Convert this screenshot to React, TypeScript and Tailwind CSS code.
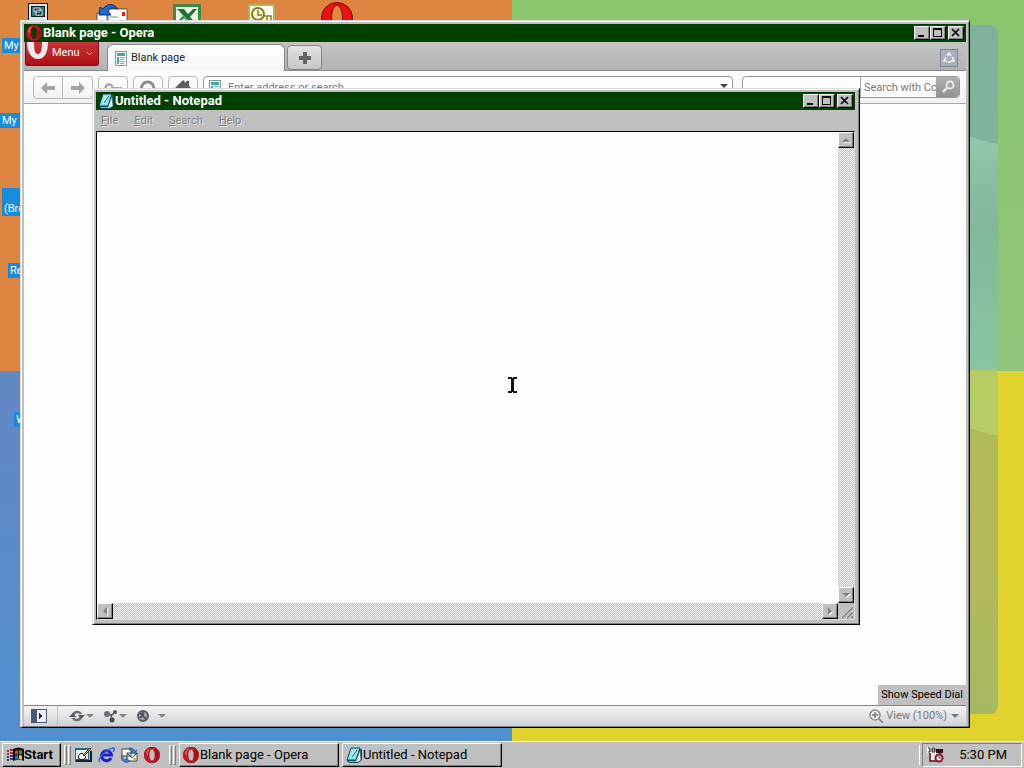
import type { ReactNode } from "react";
import clsx from "clsx";

type IconProps = {
	className?: string;
};

const raised =
	"border border-t-white border-l-white border-r-black border-b-black bg-[#c0c0c0] shadow-[inset_-1px_-1px_0_#808080]";

const dither =
	"bg-[repeating-conic-gradient(#bdbdbd_0_25%,#fbfbfb_0_50%)] bg-[length:2px_2px]";

function OperaIcon({ className }: IconProps) {
	return (
		<svg viewBox="0 0 16 16" className={className} aria-hidden>
			<path
				d="M8 0a7.800 8 0 1 0 .01 0zM8 2c4 0 4 12 0 12S4 2 8 2z"
				fill="#c8181c"
				fillRule="evenodd"
				stroke="#7c0a10"
				strokeWidth=".6"
			/>
			<path d="M2 6q1-4 4-5-2 3-2 8z" fill="#f07478" opacity=".7" />
			<path d="M11 2q4 2 4 6t-4 6q2-6 0-12z" fill="#8e0b10" opacity=".6" />
		</svg>
	);
}

function NotepadIcon({ className }: IconProps) {
	return (
		<svg viewBox="0 0 16 16" className={className} aria-hidden>
			<path d="M5 2h10l1 1v10l-4 3H3l-2-2z" fill="#0b4a58" />
			<path d="M5 1h9l-4 12H1z" fill="#7be4ec" stroke="#123" strokeWidth=".8" />
			<path d="M14 3l1 10-3 2H3l-1-1h8z" fill="#f4ffff" stroke="#176070" strokeWidth=".6" />
			<path d="M6 4h5M5.500 6h5M5 8h4M4.500 10h4" stroke="#e8ffff" />
			<path d="M11 3l-5 7" stroke="#205a90" />
		</svg>
	);
}

function PageIcon({ className }: IconProps) {
	return (
		<svg viewBox="0 0 12 15" className={className} shapeRendering="crispEdges" aria-hidden>
			<path d="M0 0h12v15H0z" fill="#7c9c9c" />
			<path d="M1 1h10v13H1z" fill="#fff" />
			<path d="M2 2h8v3H2zM2 6h2v7H2z" fill="#45a8a0" />
			<path d="M5 6h5v1H5zM5 8h4v1H5zM5 10h5v1H5zM5 12h4v1H5z" fill="#6db8b0" />
		</svg>
	);
}

function Caret({ className }: IconProps) {
	return (
		<svg viewBox="0 0 8 4" className={clsx("h-1 w-2 shrink-0", className)} aria-hidden>
			<path d="M0 0h8L4 4z" fill="currentColor" />
		</svg>
	);
}

function WindowControls({ name }: { name: string }) {
	const button = clsx(raised, "flex h-[14px] w-4 items-center justify-center");
	return (
		<div className="flex shrink-0 text-black">
			<button type="button" aria-label={`Minimize ${name}`} className={button}>
				<svg viewBox="0 0 12 10" className="h-[10px] w-3" shapeRendering="crispEdges" aria-hidden>
					<path d="M2 7h6v2H2z" />
				</svg>
			</button>
			<button type="button" aria-label={`Maximize ${name}`} className={button}>
				<svg viewBox="0 0 12 10" className="h-[10px] w-3" shapeRendering="crispEdges" aria-hidden>
					<path d="M1 0h9v9H1zM2 2v6h7V2z" fillRule="evenodd" />
				</svg>
			</button>
			<button type="button" aria-label={`Close ${name}`} className={clsx(button, "ml-[2px]")}>
				<svg viewBox="0 0 12 10" className="h-[10px] w-3" aria-hidden>
					<path d="M2 1l7 7M9 1L2 8" stroke="#000" strokeWidth="1.700" />
				</svg>
			</button>
		</div>
	);
}

function TitleBar({ title, icon }: { title: string; icon: ReactNode }) {
	return (
		<div className="flex h-[18px] shrink-0 items-center bg-[#004000] pr-[2px] pl-[2px]">
			{icon}
			<h2 className="flex-1 truncate pl-px text-[13px] leading-[18px] font-bold text-white">{title}</h2>
			<WindowControls name={title} />
		</div>
	);
}

const labels = [
	{ text: "My", className: "top-[38px] left-[2px] h-[15px]" },
	{ text: "My I", className: "top-[113px] left-0 h-[15px]" },
	{ text: "(Bro", className: "top-[188px] left-[2px] h-7 items-end" },
	{ text: "Re", className: "top-[263px] left-2 h-[15px]" },
	{ text: "W", className: "top-[412px] left-[14px] h-[15px]" },
];

function DesktopIcons() {
	return (
		<>
			<svg viewBox="0 0 22 20" className="absolute top-[2px] left-[27px] h-5 w-[22px]" aria-hidden>
				<path d="M1 1h20v18H1z" fill="#0a1822" />
				<path d="M2 2h18v16H2z" fill="#d8e8e8" />
				<path d="M4 4h14v11H4z" fill="#08222c" />
				<path d="M5 5h12v9H5z" fill="#28788a" />
				<path d="M7 6h6v4H7zM9 8h6v5H9z" fill="#102838" stroke="#e8ffff" strokeWidth=".8" />
			</svg>
			<svg viewBox="0 0 32 18" className="absolute top-[3px] left-[96px] h-[18px] w-8" aria-hidden>
				<path d="M1 10h11v8H1zM11 6h20v12H11z" fill="#fff" stroke="#222" strokeWidth=".7" />
				<path d="M26 9h3v4h-3z" fill="#d82020" />
				<path d="M14 14h8" stroke="#888" />
				<path d="M3 12L4 4l3 2C11 0 18 0 22 6c-5-2-8-1-10 2l3 4z" fill="#176bd4" stroke="#06306e" />
			</svg>
			<svg viewBox="0 0 28 18" className="absolute top-1 left-[173px] h-[18px] w-7" aria-hidden>
				<path d="M0 0h28v18H0z" fill="#3d8a48" />
				<path d="M3 3h22v15H3z" fill="#eef8e8" />
				<path d="M4 5h7l4 5 5-5h4l-7 8 5 5h-8l-3-4-5 4H4l6-6z" fill="#1c7038" />
				<path d="M5 6l11 12" stroke="#a5d8a0" />
			</svg>
			<svg viewBox="0 0 27 18" className="absolute top-1 left-[248px] h-[18px] w-[27px]" aria-hidden>
				<path d="M0 0h27v18H0z" fill="#b8b058" />
				<path d="M2 2h23v16H2z" fill="#fffff0" />
				<circle cx="10" cy="10" r="6" fill="#fffbd8" stroke="#8b7b18" strokeWidth="2" />
				<path d="M10 6v5h4M16 12h7v6M19 13v4" fill="none" stroke="#8b7b18" strokeWidth="1.500" />
			</svg>
			<svg viewBox="0 0 32 32" className="absolute top-[2px] left-[321px] size-8" aria-hidden>
				<circle cx="16" cy="16" r="15.500" fill="#ed1010" stroke="#780808" />
				<ellipse cx="16" cy="16" rx="5.500" ry="13" fill="#dc8840" stroke="#780808" />
			</svg>
			{labels.map((label) => (
				<span
					key={label.text}
					className={clsx(
						"absolute flex items-center bg-[#178bdc] px-[2px] text-[11px] leading-[15px] whitespace-nowrap text-white",
						label.className,
					)}
				>
					{label.text}
				</span>
			))}
		</>
	);
}

function Wallpaper() {
	return (
		<div className="absolute inset-0 grid grid-cols-2 grid-rows-2" aria-hidden>
			<div className="bg-[#dd8642]" />
			<div className="bg-linear-to-b from-[#8ac66e] to-[#91c47b]" />
			<div className="bg-linear-to-b from-[#6288c3] to-[#5190d0]" />
			<div className="bg-[#e0d32e]" />
			<div className="absolute top-[25px] right-[26px] bottom-1/2 w-16 rounded-tr-lg bg-linear-to-b from-[#7fb09c] via-[#80b69c] to-[#8ac6a2]" />
			<div className="absolute top-1/2 right-[26px] bottom-[27px] w-16 rounded-br-lg bg-linear-to-b from-[#b0ba58] via-[#b4b958] to-[#a6b862]" />
			<svg viewBox="0 0 28 300" className="absolute top-[136px] right-[26px] h-[300px] w-7">
				<defs>
					<linearGradient id="glow" x1="0" y1="0" x2="0" y2="1">
						<stop offset="0" stopColor="#93c7aa" />
						<stop offset="1" stopColor="#93c7aa" stopOpacity="0" />
					</linearGradient>
				</defs>
				<path d="M0 0q14 6 28 8v82H0z" fill="url(#glow)" />
				<path d="M0 292q16 6 28 8V234H0z" fill="#b7cc65" />
			</svg>
		</div>
	);
}

function OperaTabs() {
	return (
		<div className="flex h-[29px] shrink-0 items-start border-b border-[#8a8a8a] bg-linear-to-b from-[#c4c4c4] to-[#b2b2b2] pr-2 pl-px">
			<button
				type="button"
				className="flex h-6 w-[74px] items-center rounded-b-[3px] border border-t-0 border-[#7d1014] bg-linear-to-b from-[#c63338] to-[#ad0c12] text-[11px] text-white"
			>
				<svg viewBox="0 0 22 20" className="h-5 w-[22px] self-start" aria-hidden>
					<path d="M1 0h7c0 8 1 12 4 12s4-4 4-12h6c0 11-4 17-10 17S1 11 1 0z" fill="#f2e8e8" />
				</svg>
				<span className="flex-1 pl-1 text-left">Menu</span>
				<svg viewBox="0 0 7 5" className="mr-[5px] h-[5px] w-[7px]" aria-hidden>
					<path d="M1 1l2.500 3L6 1" fill="none" stroke="#e68c8e" />
				</svg>
			</button>
			<button
				type="button"
				className="mt-[2px] ml-2 flex h-[27px] w-[178px] items-center gap-1 rounded-t-md border border-b-0 border-[#858585] bg-linear-to-b from-[#fff] to-[#f6f6f6] pl-[7px] text-[11px] text-[#222]"
			>
				<PageIcon className="h-[15px] w-3" />
				Blank page
			</button>
			<button
				type="button"
				aria-label="New tab"
				className="mt-[3px] ml-[2px] flex h-[25px] w-[35px] items-center justify-center rounded-[4px] border border-[#858585] bg-linear-to-b from-[#e2e2e2] to-[#c6c6c6]"
			>
				<svg viewBox="0 0 12 12" className="size-3" aria-hidden>
					<path d="M4 0h4v4h4v4H8v4H4V8H0V4h4z" fill="#62626a" />
				</svg>
			</button>
			<button
				type="button"
				aria-label="Closed tabs"
				className="mt-[7px] ml-auto flex size-[18px] items-center justify-center border border-[#7d8794] bg-[#a8b0bb]"
			>
				<svg viewBox="0 0 12 12" className="size-3" aria-hidden>
					<path d="M4 4l2-3 2 3M9 5l2 4H8M3 5L1 9h3M5 10h3" fill="none" stroke="#f4f6fa" strokeWidth="1.500" />
				</svg>
			</button>
		</div>
	);
}

function OperaToolbar() {
	const tool = "flex h-[23px] w-[30px] items-center justify-center border border-[#b8b8b8] bg-linear-to-b from-white to-[#f2f2f2]";
	return (
		<div className="flex h-[33px] shrink-0 items-start border-b border-[#a8a8a8] bg-linear-to-b from-white to-[#f0f0f0] pt-[5px] pr-[6px] pl-[9px] text-[11px]">
			<button type="button" aria-label="Back" className={clsx(tool, "rounded-l-[4px]")}>
				<svg viewBox="0 0 14 12" className="h-3 w-[14px]" aria-hidden>
					<path d="M0 6l6-6v4h8v4H6v4z" fill="#a4a4a4" />
				</svg>
			</button>
			<button type="button" aria-label="Forward" className={clsx(tool, "rounded-r-[4px] border-l-0")}>
				<svg viewBox="0 0 14 12" className="h-3 w-[14px]" aria-hidden>
					<path d="M14 6L8 0v4H0v4h8v4z" fill="#a4a4a4" />
				</svg>
			</button>
			<button type="button" aria-label="Password manager" className={clsx(tool, "ml-[5px] rounded-[4px]")}>
				<svg viewBox="0 0 18 12" className="h-3 w-[18px]" aria-hidden>
					<path d="M8 5h10v3H8z" fill="#aaa" />
					<circle cx="5" cy="6" r="3.500" fill="none" stroke="#aaa" strokeWidth="2.500" />
				</svg>
			</button>
			<button type="button" aria-label="Reload" className={clsx(tool, "ml-[5px] rounded-[4px]")}>
				<svg viewBox="0 0 16 16" className="size-4" aria-hidden>
					<path d="M2 10a6 6 0 1 1 10 2" fill="none" stroke="#8c8c8c" strokeWidth="3" />
				</svg>
			</button>
			<button type="button" aria-label="Home" className={clsx(tool, "ml-[5px] rounded-[4px]")}>
				<svg viewBox="0 0 18 16" className="h-4 w-[18px]" aria-hidden>
					<path d="M9 0l8 8h-3v8H4V8H1z" fill="#5e5e5e" />
					<path d="M12 1h3v5h-3z" fill="#5e5e5e" />
				</svg>
			</button>
			<label className="ml-[5px] flex h-[23px] flex-1 items-center gap-[7px] rounded-[4px] border border-[#969696] bg-white pr-1 pl-[5px]">
				<PageIcon className="h-[15px] w-3 shrink-0" />
				<span className="sr-only">Address</span>
				<input
					type="text"
					placeholder="Enter address or search"
					className="min-w-0 flex-1 bg-transparent leading-4 outline-none placeholder:text-[#777]"
				/>
				<Caret className="mt-[7px] self-start text-[#444]" />
			</label>
			<div className="ml-[9px] flex h-[22px] w-[218px] items-center rounded-[4px] border border-[#969696] bg-white">
				<div className="h-full w-[118px] shrink-0 border-r border-[#aaa]" />
				<input
					type="text"
					aria-label="Search"
					placeholder="Search with Cc"
					className="h-full w-[75px] bg-transparent pl-[3px] leading-4 outline-none placeholder:text-[#777]"
				/>
				<button
					type="button"
					aria-label="Run search"
					className="flex h-full flex-1 items-center justify-center rounded-r-[4px] bg-linear-to-b from-[#b0b0b0] to-[#929292]"
				>
					<svg viewBox="0 0 14 14" className="size-[14px]" aria-hidden>
						<circle cx="9" cy="5" r="3.500" fill="none" stroke="#e6e6e6" strokeWidth="2" />
						<path d="M6.500 7.500L2 12" stroke="#e6e6e6" strokeWidth="2.500" />
					</svg>
				</button>
			</div>
		</div>
	);
}

function OperaStatusBar() {
	return (
		<div className="flex h-[21px] shrink-0 items-center border-t border-[#858585] bg-linear-to-b from-[#f5f5f5] to-[#cfd2d6] text-[#858585]">
			<button type="button" aria-label="Panels" className="ml-[7px]">
				<svg viewBox="0 0 16 14" className="h-[14px] w-4" shapeRendering="crispEdges" aria-hidden>
					<path d="M0 0h16v14H0z" fill="#4a5a78" />
					<path d="M6 1h9v12H6z" fill="#eef2f8" />
					<path d="M8 4h1v1h1v1h1v2h-1v1H9v1H8z" fill="#222c40" />
				</svg>
			</button>
			<div className="mx-[10px] h-full w-px bg-[#c2c2c2]" />
			<button type="button" aria-label="Opera Link" className="flex items-center">
				<svg viewBox="0 0 18 14" className="h-[14px] w-[18px]" aria-hidden>
					<path d="M5 6a4.500 4.500 0 0 1 8-1M13 8a4.500 4.500 0 0 1-8 1" fill="none" stroke="#6b6e74" strokeWidth="2.500" />
					<path d="M1 8l4-4 3 4zM17 6l-4 4-3-4z" fill="#55585e" />
				</svg>
				<Caret />
			</button>
			<button type="button" aria-label="Opera Unite" className="ml-2 flex items-center">
				<svg viewBox="0 0 17 14" className="h-[14px] w-[17px]" aria-hidden>
					<path d="M5 5l5 1 3-3M9 6l1 5" fill="none" stroke="#55585e" strokeWidth="1.500" />
					<circle cx="5" cy="5" r="3" fill="#6b6e74" />
					<circle cx="13" cy="3" r="2" fill="#55585e" />
					<circle cx="10" cy="11" r="2.500" fill="#44474d" />
				</svg>
				<Caret />
			</button>
			<button type="button" aria-label="Opera Turbo" className="ml-[9px] flex items-center gap-2">
				<svg viewBox="0 0 14 14" className="size-[14px]" aria-hidden>
					<circle cx="7" cy="7" r="5" fill="#a4a7ad" stroke="#55585e" strokeWidth="2" />
					<path d="M4 4l6 6M7 3v3M4 8h2" stroke="#404248" strokeWidth="1.500" />
				</svg>
				<Caret />
			</button>
			<button type="button" className="mr-[7px] ml-auto flex items-center text-[11px] leading-4 text-[#777]">
				<svg viewBox="0 0 15 14" className="mr-[2px] h-[14px] w-[15px]" aria-hidden>
					<circle cx="6" cy="6" r="5" fill="#f0f0f0" stroke="#8a8a8a" strokeWidth="1.500" />
					<path d="M3 6h6M6 3v6M10 10l4 4" stroke="#777" strokeWidth="1.500" />
				</svg>
				View (100%)
				<Caret className="ml-1" />
			</button>
		</div>
	);
}

function OperaWindow() {
	return (
		<section className="absolute top-5 right-[54px] bottom-[13px] left-5 flex flex-col border border-t-[#dcdcdc] border-r-black border-b-black border-l-[#dcdcdc] bg-[#c0c0c0] p-[3px] pb-px shadow-[inset_1px_1px_0_#fff,inset_-1px_-1px_0_#808080]">
			<TitleBar title="Blank page - Opera" icon={<OperaIcon className="size-4 shrink-0" />} />
			<OperaTabs />
			<OperaToolbar />
			<main className="flex flex-1 items-end justify-end bg-[#fefefe]">
				<button type="button" className="h-5 bg-[#c0c0c0] px-[3px] text-[11px] leading-5 text-black">
					Show Speed Dial
				</button>
			</main>
			<OperaStatusBar />
		</section>
	);
}

const arrows = {
	up: "M4 2l4 4H0z",
	down: "M0 2h8L4 6z",
	left: "M6 0v8L2 4z",
	right: "M2 0v8l4-4z",
};

function ScrollButton({ direction }: { direction: keyof typeof arrows }) {
	return (
		<button
			type="button"
			aria-label={`Scroll ${direction}`}
			className={clsx(raised, "flex size-4 shrink-0 items-center justify-center")}
		>
			<svg viewBox="0 0 9 9" className="size-[9px]" aria-hidden>
				<path d={arrows[direction]} fill="#fff" transform="translate(1 1)" />
				<path d={arrows[direction]} fill="#808080" />
			</svg>
		</button>
	);
}

function NotepadWindow() {
	return (
		<section className="absolute top-[88px] right-[164px] bottom-[116px] left-[92px] flex flex-col border border-t-[#dcdcdc] border-r-black border-b-black border-l-[#dcdcdc] bg-[#c0c0c0] pt-[3px] pr-[4px] pb-[4px] pl-[3px] shadow-[inset_1px_1px_0_#fff,inset_-1px_-1px_0_#808080]">
			<TitleBar title="Untitled - Notepad" icon={<NotepadIcon className="size-4 shrink-0" />} />
			<nav className="flex h-[21px] shrink-0 items-center gap-4 pl-[5px] text-[11px] text-[#828282]">
				{["File", "Edit", "Search", "Help"].map((item) => (
					<button key={item} type="button" className="leading-5 text-shadow-[1px_1px_0_#e4e4e4]">
						<span className="underline">{item[0]}</span>
						{item.slice(1)}
					</button>
				))}
			</nav>
			<div className="grid min-h-0 flex-1 grid-cols-[1fr_16px] grid-rows-[1fr_16px] border border-t-black border-r-[#dcdcdc] border-b-[#dcdcdc] border-l-black">
				<textarea
					aria-label="Document"
					className="size-full resize-none bg-[#fefefe] p-1 font-mono text-[13px] outline-none"
				/>
				<div className={clsx(dither, "flex flex-col justify-between")}>
					<ScrollButton direction="up" />
					<ScrollButton direction="down" />
				</div>
				<div className={clsx(dither, "flex justify-between")}>
					<ScrollButton direction="left" />
					<ScrollButton direction="right" />
				</div>
				<svg viewBox="0 0 16 16" className="size-4" aria-hidden>
					<path d="M3 15L15 3M8 15l7-7M12 15l3-3" stroke="#fff" />
					<path d="M4 15L15 4M9 15l6-6M13 15l2-2" stroke="#808080" strokeWidth="1.500" />
				</svg>
			</div>
		</section>
	);
}

function Taskbar() {
	const grip = "h-5 w-[3px] border border-t-white border-l-white border-r-[#808080] border-b-[#808080]";
	const task = clsx(raised, "flex h-6 w-40 items-center leading-5 text-black");
	return (
		<footer className="flex h-[27px] shrink-0 items-center border-t border-white bg-[#c0c0c0] px-[2px] text-[13px]">
			<button type="button" className={clsx(raised, "flex h-6 w-[59px] items-center pl-1 font-bold")}>
				<svg viewBox="0 0 17 16" className="h-4 w-[17px] shrink-0" aria-hidden>
					<path d="M6 2q5-3 11 0v12q-5-3-11 0z" fill="#080808" />
					<path d="M8 4q2-1 3-1v4q-2 0-3 1z" fill="#d93a33" />
					<path d="M12 3q2 0 3 1v4q-1-1-3-1z" fill="#31964a" />
					<path d="M8 9q2-1 3-1v4q-2 0-3 1z" fill="#356cc4" />
					<path d="M12 8q2 0 3 1v4q-1-1-3-1z" fill="#e2cf3a" />
					<path d="M0 4h2M3 3h3M0 7h2M3 6h3" stroke="#a03048" strokeWidth="2" />
					<path d="M0 10h2M3 9h3M0 13h2M3 12h3" stroke="#3c3878" strokeWidth="2" />
				</svg>
				Start
			</button>
			<div className={clsx(grip, "ml-[3px]")} />
			<div className={clsx(grip, "ml-px")} />
			<div className="ml-1 flex items-center gap-[6px]">
				<button type="button" aria-label="Show desktop">
					<svg viewBox="0 0 17 16" className="h-4 w-[17px]" aria-hidden>
						<path d="M0 1h14v14H0z" fill="#286880" />
						<path d="M1 3h12v9H1z" fill="#e4eeee" />
						<path d="M1 14h15V4" fill="none" stroke="#0b2430" strokeWidth="2" />
						<path d="M4 12q-2-4 3-6l4 4q-2 4-7 2z" fill="#fff" stroke="#111" />
						<path d="M8 8l7-7 1 1-7 7z" fill="#d8b45c" stroke="#111" strokeWidth=".8" />
					</svg>
				</button>
				<button type="button" aria-label="Internet Explorer">
					<svg viewBox="0 0 17 16" className="h-4 w-[17px]" aria-hidden>
						<path d="M13 11A5 5 0 1 1 13.500 8H5" fill="none" stroke="#1420c8" strokeWidth="3" />
						<path d="M2 15q-3-2 3-8t11-6q1 1-1 4" fill="none" stroke="#2f62e4" strokeWidth="1.500" />
					</svg>
				</button>
				<button type="button" aria-label="Outlook Express">
					<svg viewBox="0 0 17 16" className="h-4 w-[17px]" aria-hidden>
						<path d="M1 2h9v7H1zM6 6h10v8H6z" fill="#fff" stroke="#344" />
						<path d="M6 6l5 5 5-5" fill="none" stroke="#344" />
						<path d="M8 1q4-1 6 3l2-1-2 4-4-2 2-1q-2-2-4-1zM1 9q0 4 4 4v-2l4 3-4 2v-1q-5 0-5-6z" fill="#3b80d8" stroke="#123c78" strokeWidth=".5" />
						<path d="M12 11h3v2h-3z" fill="#e8bd35" />
					</svg>
				</button>
				<button type="button" aria-label="Opera">
					<OperaIcon className="size-4" />
				</button>
			</div>
			<div className={clsx(grip, "ml-[9px]")} />
			<div className={clsx(grip, "ml-px")} />
			<button type="button" className={clsx(task, "ml-[3px] pl-[3px]")}>
				<OperaIcon className="size-4 shrink-0" />
				<span className="pl-px">Blank page - Opera</span>
			</button>
			<button type="button" className={clsx(task, "ml-[3px] pl-[3px]")}>
				<NotepadIcon className="size-4 shrink-0" />
				<span className="pl-px">Untitled - Notepad</span>
			</button>
			<div className="ml-auto h-5 w-px bg-white" />
			<div className="ml-[2px] flex h-6 w-[100px] items-center justify-between border border-t-[#808080] border-r-white border-b-white border-l-[#808080] pr-[14px] pl-1">
				<svg viewBox="0 0 17 16" className="h-4 w-[17px]" aria-hidden>
					<path d="M3 5h10v9H3z" fill="#f0e8e8" stroke="#4c1020" strokeWidth="1.500" />
					<path d="M9 2h7v4H9z" fill="#3a1018" />
					<path d="M0 0h9v6H0z" fill="#fff" />
					<path d="M1 1h2v4H1M2 3h1M5 1h3v4H5zM5 3h3" fill="none" stroke="#222" />
					<circle cx="12" cy="11" r="3.500" fill="#fff" stroke="#8c1028" strokeWidth="2" />
					<path d="M12 9v2h2" fill="none" stroke="#8c1028" />
				</svg>
				<time>5:30 PM</time>
			</div>
		</footer>
	);
}

export default function App() {
	return (
		<div className="flex h-screen flex-col overflow-hidden font-['Roboto','Liberation_Sans',sans-serif] select-none">
			<div className="relative min-h-0 flex-1 overflow-hidden">
				<Wallpaper />
				<DesktopIcons />
				<OperaWindow />
				<NotepadWindow />
				{/* text cursor */}
				<svg
					viewBox="0 0 9 16"
					className="absolute top-[377px] left-[508px] h-4 w-[9px]"
					shapeRendering="crispEdges"
					aria-hidden
				>
					<path d="M0 0h4v1h1V0h4v2H6v12h3v2H5v-1H4v1H0v-2h3V2H0z" fill="#111" />
				</svg>
			</div>
			<Taskbar />
		</div>
	);
}
